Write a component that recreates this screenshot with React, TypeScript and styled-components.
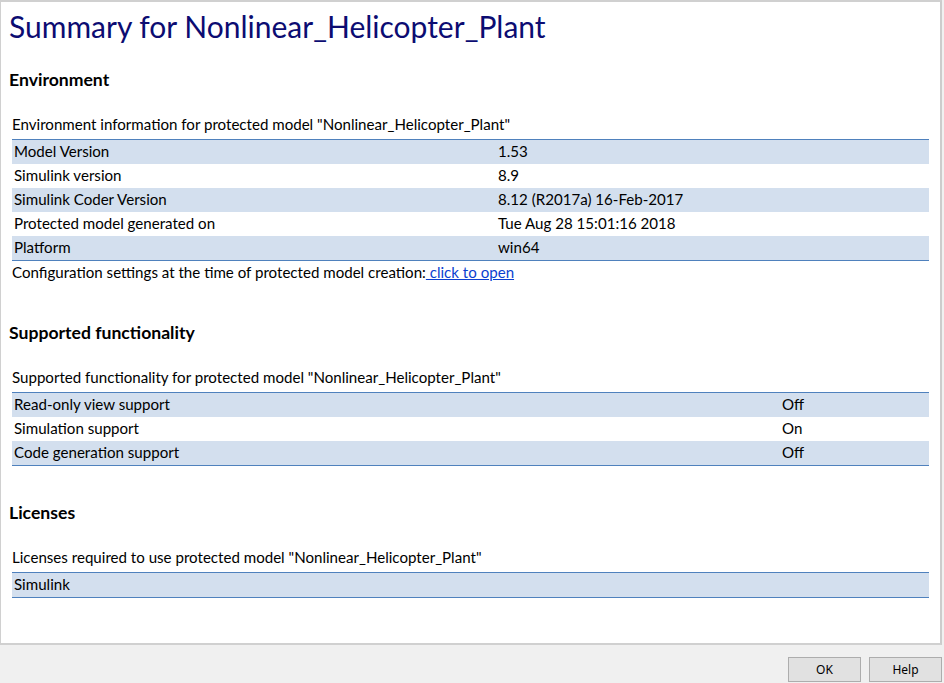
import React from "react";
import styled, { createGlobalStyle } from "styled-components";

const GlobalStyle = createGlobalStyle`
  html, body { margin: 0; padding: 0; background: #f0f0f0; }
  body { font-family: Lato, "Open Sans", sans-serif; color: #000; }
`;

const Window = styled.div`
  width: 944px;
  height: 683px;
  display: flex;
  flex-direction: column;
  background: #f0f0f0;
  overflow: hidden;
`;

const Panel = styled.div`
  box-sizing: border-box;
  width: 942px;
  height: 645px;
  background: #fff;
  border-top: 2px solid #d0d0d0;
  border-left: 1px solid #d0d0d0;
  border-right: 2px solid #cccccc;
  border-bottom: 2px solid #d0d0d0;
  padding: 6px 11px 0 8px;
`;

const Title = styled.h1`
  margin: 0;
  font-family: Lato, sans-serif;
  font-weight: 400;
  font-size: 30px;
  line-height: 36px;
  color: #0c0c72;
`;

const Section = styled.section<{ $top: number }>`
  margin-top: ${(p) => p.$top}px;
`;

const Heading = styled.h2`
  margin: 0;
  font-size: 17.6px;
  line-height: 20px;
  font-weight: 700;
`;

const Caption = styled.div`
  margin: 24px 0 5px 3px;
  font-size: 15.1px;
  line-height: 20px;
`;

const Table = styled.div`
  margin-left: 3px;
  border-top: 1px solid #4f81bd;
  border-bottom: 1px solid #4f81bd;
`;

const Row = styled.div<{ $shade: boolean; $split: number }>`
  box-sizing: border-box;
  display: grid;
  grid-template-columns: ${(p) => p.$split}px 1fr;
  height: 24px;
  padding-bottom: 2px;
  align-items: center;
  background: ${(p) => (p.$shade ? "#d3dfee" : "#ffffff")};
  font-size: 15.1px;
`;

const Cell = styled.div`
  padding-left: 2px;
  white-space: nowrap;
`;

const Note = styled.div`
  margin: 1px 0 0 3px;
  font-size: 15.1px;
  line-height: 20px;
`;

const Link = styled.a`
  color: #0b3fd0;
  text-decoration: underline;
  cursor: pointer;
`;

const Footer = styled.div`
  flex: 1;
  display: flex;
  justify-content: flex-end;
  align-items: flex-start;
  gap: 8px;
  padding: 12px 2px 0 0;
`;

const Button = styled.button`
  box-sizing: border-box;
  width: 73px;
  height: 25px;
  background: #e1e1e1;
  border: 1px solid #adadad;
  font-family: "Noto Sans", "Liberation Sans", sans-serif;
  font-size: 12px;
  color: #000;
  padding: 0;
`;

type TableProps = { rows: [string, string][]; split: number };

const DataTable = ({ rows, split }: TableProps) => (
  <Table>
    {rows.map(([k, v], i) => (
      <Row key={k} $shade={i % 2 === 0} $split={split}>
        <Cell>{k}</Cell>
        <Cell>{v}</Cell>
      </Row>
    ))}
  </Table>
);

export default function App() {
  return (
    <>
      <GlobalStyle />
      <Window>
        <Panel>
          <Title>Summary for Nonlinear_Helicopter_Plant</Title>
          <Section $top={26}>
            <Heading>Environment</Heading>
            <Caption>Environment information for protected model "Nonlinear_Helicopter_Plant"</Caption>
            <DataTable
              split={484}
              rows={[
                ["Model Version", "1.53"],
                ["Simulink version", "8.9"],
                ["Simulink Coder Version", "8.12 (R2017a) 16-Feb-2017"],
                ["Protected model generated on", "Tue Aug 28 15:01:16 2018"],
                ["Platform", "win64"],
              ]}
            />
            <Note>
              Configuration settings at the time of protected model creation:
              <Link> click to open</Link>
            </Note>
          </Section>
          <Section $top={41}>
            <Heading>Supported functionality</Heading>
            <Caption>Supported functionality for protected model "Nonlinear_Helicopter_Plant"</Caption>
            <DataTable
              split={768}
              rows={[
                ["Read-only view support", "Off"],
                ["Simulation support", "On"],
                ["Code generation support", "Off"],
              ]}
            />
          </Section>
          <Section $top={37}>
            <Heading>Licenses</Heading>
            <Caption>Licenses required to use protected model "Nonlinear_Helicopter_Plant"</Caption>
            <DataTable split={768} rows={[["Simulink", ""]]} />
          </Section>
        </Panel>
        <Footer>
          <Button>OK</Button>
          <Button>Help</Button>
        </Footer>
      </Window>
    </>
  );
}
